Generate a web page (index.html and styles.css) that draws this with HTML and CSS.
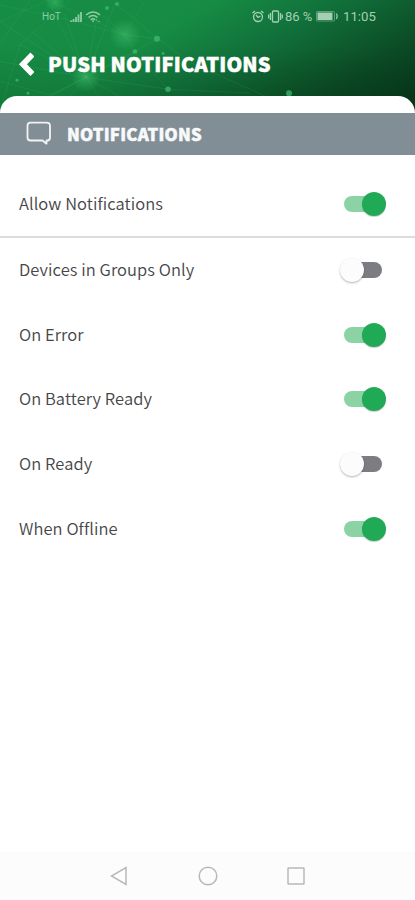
FILE: index.html
```html
<!DOCTYPE html>
<html lang="en">
<head>
<meta charset="utf-8">
<title>Push Notifications</title>
<link rel="stylesheet" href="styles.css">
</head>
<body>
<div class="screen">
  <header class="header">
    <svg class="network" viewBox="0 0 415 114" preserveAspectRatio="none" aria-hidden="true">
      <defs>
        <radialGradient id="glow"><stop offset="0" stop-color="#45c571" stop-opacity=".5"/><stop offset="1" stop-color="#45c571" stop-opacity="0"/></radialGradient>
      </defs>
      <g stroke="#62d38b" stroke-opacity=".15" stroke-width=".7" fill="none">
        <path d="M0 22L48 0L86 78L22 112M0 22L86 78L158 39L115 3L86 78L168 90M48 0L125 35L158 39L190 63M0 62L86 78L135 53L125 35M86 78L55 114M86 78L110 114M86 78L145 112M30 0L0 45M70 0L20 45L0 112M125 35L60 18L0 5M135 53L168 90L250 94M190 63L270 99M20 45L86 78L64 14M86 78L98 12L125 35L145 0M0 82L50 96L86 78L32 32"/>
      </g>
      <circle cx="125" cy="35" r="16" fill="url(#glow)"/>
      <circle cx="86" cy="78" r="15" fill="url(#glow)"/>
      <circle cx="55" cy="2" r="10" fill="url(#glow)"/>
      <g fill="#43bd70" fill-opacity=".7">
        <circle cx="157" cy="39" r="3"/><circle cx="135" cy="52" r="2.3"/><circle cx="168" cy="90" r="2.8"/><circle cx="117" cy="4" r="2"/><circle cx="107" cy="8" r="2"/><circle cx="289" cy="94" r="3"/><circle cx="28" cy="94" r="1.5"/><circle cx="17" cy="81" r="1.5"/><circle cx="163" cy="54" r="1.5"/>
      </g>
    </svg>
    <div class="status">
      <span class="carrier">HoT</span>
      <svg class="signal" width="31" height="14" viewBox="0 0 31 14">
        <path d="M1 12V10.500M3.500 12V9M6 12V7M8.500 12V4.500M11 12V2" stroke="currentColor" stroke-width="1.800"/>
        <g fill="none" stroke="currentColor" stroke-width="1.500"><path d="M16 5Q23 -1 30 5M18.500 7.500Q23 3.500 27.500 7.500M20.800 9.800Q23 7.800 25.200 9.800"/></g>
        <path d="M21.500 10.500h3L23 12.500zM26 9l1.500 1.500H26zM28 11h2l-1 1.500z" fill="currentColor"/>
      </svg>
      <span class="spacer"></span>
      <svg class="alarm" width="12" height="13" viewBox="0 0 12 13" fill="none" stroke="currentColor" stroke-width="1.300"><circle cx="6" cy="7" r="4.500"/><path d="M.5 3L3 1M9 1l2.500 2M4 5l2 2.500L8.500 6"/></svg>
      <svg class="vibrate" width="15" height="13" viewBox="0 0 15 13" fill="none" stroke="currentColor" stroke-width="1.300"><rect x="4.500" y="1" width="6" height="11" rx="1"/><path d="M2.500 3v7M.7 4.500v4M12.500 3v7M14.300 4.500v4"/></svg>
      <span class="percent">86 %</span>
      <svg class="battery" width="23" height="11" viewBox="0 0 23 11"><rect x=".5" y=".5" width="18" height="9.500" rx="1" fill="none" stroke="currentColor" stroke-opacity=".5"/><rect x="1.500" y="1.500" width="15" height="7.500" fill="currentColor"/><path d="M20.500 2.500q1.500 2.500 0 5.500" fill="none" stroke="currentColor" stroke-width="1.300"/></svg>
      <span class="time">11:05</span>
    </div>
    <div class="titlebar">
      <svg class="back" width="17" height="25" viewBox="0 0 17 25"><path d="M15.500 2.500L6 12.300L15.500 22" fill="none" stroke="#fff" stroke-width="5.800"/></svg>
      <h1 class="title">PUSH NOTIFICATIONS</h1>
    </div>
  </header>
  <main class="sheet">
    <div class="section">
      <svg class="bubble" width="26" height="25" viewBox="0 0 26 25"><path d="M4.500 1.700H20.500Q24 1.700 24 5V16.500Q24 19.500 21.500 19.500H20.500V22.700L16.500 19.500H4.500Q1.500 19.500 1.500 16.500V5Q1.500 1.700 4.500 1.700Z" fill="none" stroke="#f1f4f6" stroke-width="1.800" stroke-linejoin="round"/></svg>
      <h2 class="section-title">NOTIFICATIONS</h2>
    </div>
    <div class="row first"><span class="label">Allow Notifications</span><span class="toggle on"><i class="thumb"></i></span></div>
    <div class="list">
      <div class="row"><span class="label">Devices in Groups Only</span><span class="toggle"><i class="thumb"></i></span></div>
      <div class="row"><span class="label">On Error</span><span class="toggle on"><i class="thumb"></i></span></div>
      <div class="row"><span class="label">On Battery Ready</span><span class="toggle on"><i class="thumb"></i></span></div>
      <div class="row"><span class="label">On Ready</span><span class="toggle"><i class="thumb"></i></span></div>
      <div class="row"><span class="label">When Offline</span><span class="toggle on"><i class="thumb"></i></span></div>
    </div>
  </main>
  <nav class="nav">
    <svg width="18" height="20" viewBox="0 0 18 20"><path d="M16 1.500V18.500L1.500 10Z"/></svg>
    <svg width="20" height="20" viewBox="0 0 20 20"><circle cx="10" cy="10" r="8.800"/></svg>
    <svg width="18" height="18" viewBox="0 0 18 18"><rect x="1" y="1" width="16" height="16" rx=".5"/></svg>
  </nav>
</div>
</body>
</html>
```

FILE: styles.css
```css
* { box-sizing: border-box; }
body { margin: 0; background: #fff; font-family: "Noto Sans CJK SC", "Noto Sans", sans-serif; }
.screen { width: 415px; height: 900px; display: flex; flex-direction: column; overflow: hidden; }
.header {
  position: relative; height: 113px; flex: none; color: #fff;
  background:
    linear-gradient(180deg, rgba(0, 30, 5, 0) 40%, rgba(0, 30, 5, .18) 100%),
    linear-gradient(150deg, #168d45 0%, #168b44 36%, #11703a 56%, #0b4a25 80%, #06331a 100%);
}
.network { position: absolute; inset: 0; width: 100%; height: 100%; }
.status { position: relative; height: 33px; padding: 0 39px 0 42px; display: flex; align-items: center; color: #a5cfb4; font-family: Roboto, sans-serif; font-size: 13px; line-height: 33px; }
.carrier { font-size: 10px; width: 28px; color: #8fcca5; }
.signal { color: #8fcca5; }
.spacer { flex: 1; }
.alarm { margin-right: 4px; }
.vibrate { margin-right: 2px; }
.percent { width: 31px; white-space: nowrap; }
.battery { margin-right: 4px; }
.time { width: 33px; font-size: 13.2px; }
.titlebar { position: relative; height: 62px; padding-left: 17px; display: flex; align-items: center; }
.back { margin-right: 14px; }
.title { margin: 0; font-size: 20px; font-weight: 900; line-height: 30px; letter-spacing: .2px; white-space: nowrap; -webkit-text-stroke: .5px #fff; }
.sheet { position: relative; flex: 1; margin-top: -17px; padding-top: 17px; background: #fff; border-radius: 17px 17px 0 0; }
.section { height: 42px; padding-left: 26px; display: flex; align-items: center; background: #828e96; }
.bubble { margin: -2px 15px 0 0; }
.section-title { margin: 0; color: #f7f9fa; font-size: 16.8px; font-weight: 900; line-height: 26px; letter-spacing: .2px; white-space: nowrap; -webkit-text-stroke: .5px #f7f9fa; }
.row { height: 64.6px; padding: 0 28px 0 19px; display: flex; align-items: center; justify-content: space-between; }
.first { height: 83px; padding-top: 16px; border-bottom: 2px solid #dcdcdc; }
.label { padding-bottom: 2px; color: #464648; font-size: 16.5px; font-weight: 350; line-height: 26px; letter-spacing: .07px; font-variant-ligatures: common-ligatures; white-space: nowrap; }
.toggle { display: flex; align-items: center; width: 39px; height: 16px; margin-right: 5px; border-radius: 0 8px 8px 0; background: linear-gradient(#7c7c83, #7c7c83) 10px 0 / 32px 16px no-repeat; }
.thumb { flex: none; width: 24px; height: 24px; margin-left: -3px; border-radius: 50%; background: #fcfcfc; box-shadow: 0 1px 2px rgba(0, 0, 0, .3); }
.toggle.on { width: 38px; justify-content: flex-end; border-radius: 8px; background: #8bd3a5; }
.toggle.on .thumb { margin: 0 -4px 0 0; background: #20aa55; box-shadow: 0 1px 1px rgba(0, 0, 0, .2); }
.nav { height: 48px; flex: none; padding: 0 110px; display: flex; align-items: center; justify-content: space-between; background: #fcfcfc; }
.nav svg { fill: none; stroke: #b9b9b9; stroke-width: 1.5; }
```
